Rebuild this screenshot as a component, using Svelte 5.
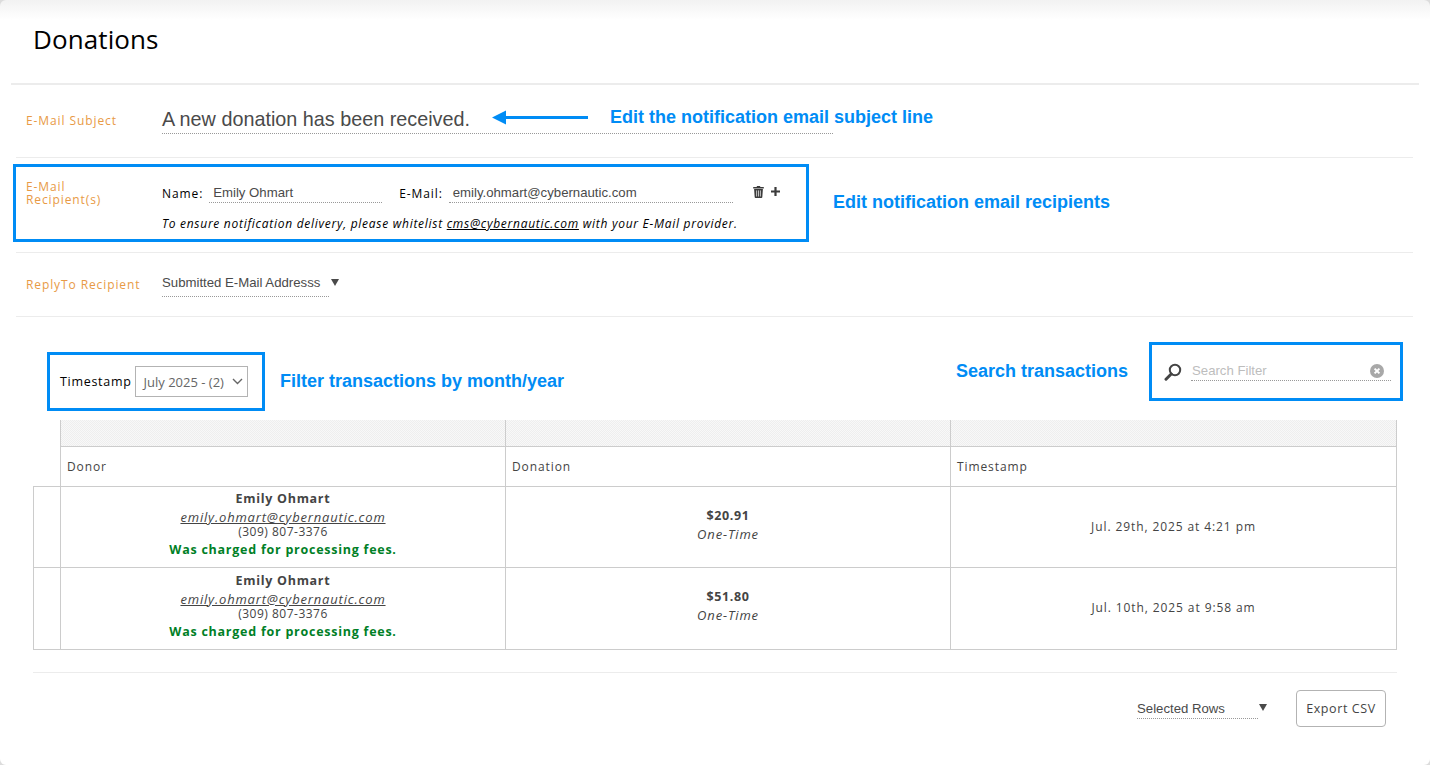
<script>
  const rows = [
    { amount: '$20.91', when: 'Jul. 29th, 2025 at 4:21 pm' },
    { amount: '$51.80', when: 'Jul. 10th, 2025 at 9:58 am' }
  ];
</script>

<div class="page">
  <h1>Donations</h1>

  <section class="setting subject">
    <span class="label">E-Mail Subject</span>
    <div class="subject-field">A new donation has been received.</div>
    <svg class="arrow" width="96" height="15" viewBox="0 0 96 15"><path d="M0 7.5 L14 0.5 V6 H96 V9 H14 V14.5 Z" fill="#008cf5"/></svg>
    <span class="note subject-note">Edit the notification email subject line</span>
  </section>

  <section class="setting recipients">
    <div class="callout recipients-box">
      <span class="label two-line">E-Mail<br />Recipient(s)</span>
      <div class="recipient-body">
        <div class="recipient-line">
          <span class="cap">Name:</span>
          <span class="field name">Emily Ohmart</span>
          <span class="cap mail">E-Mail:</span>
          <span class="field email">emily.ohmart@cybernautic.com</span>
          <svg class="trash" width="11" height="12" viewBox="0 0 11 12"><path d="M3.6 1 L4 0.1 H7 L7.4 1 H10.8 V2.5 H0.2 V1 Z M1.1 3 H9.9 L9.3 11.2 Q9.2 12 8.4 12 H2.6 Q1.8 12 1.7 11.2 Z" fill="#3b3b3b"/><path d="M3.6 4.4 V10.5 M5.5 4.4 V10.5 M7.4 4.4 V10.5" stroke="#fff" stroke-width=".7"/></svg>
          <svg class="plus" width="9" height="9" viewBox="0 0 9 9"><path d="M3.4 0 H5.6 V3.4 H9 V5.6 H5.6 V9 H3.4 V5.6 H0 V3.4 H3.4 Z" fill="#3b3b3b"/></svg>
        </div>
        <p class="hint">To ensure notification delivery, please whitelist <u>cms@cybernautic.com</u> with your E-Mail provider.</p>
      </div>
    </div>
    <span class="note recipients-note">Edit notification email recipients</span>
  </section>

  <section class="setting reply">
    <span class="label">ReplyTo Recipient</span>
    <div class="picker reply-picker">Submitted E-Mail Addresss</div>
    <span class="tri"></span>
  </section>

  <div class="filters">
    <div class="callout stamp-box">
      <span class="stamp-label">Timestamp</span>
      <div class="select">
        <span>July 2025 - (2)</span>
        <svg width="11" height="7" viewBox="0 0 11 7"><path d="M1 1 L5.5 5.5 L10 1" fill="none" stroke="#666" stroke-width="1.4"/></svg>
      </div>
    </div>
    <span class="note filter-note">Filter transactions by month/year</span>
    <span class="note search-note">Search transactions</span>
    <div class="callout search-box">
      <svg class="glass" width="18" height="18" viewBox="0 0 18 18"><circle cx="11" cy="7" r="5.2" fill="none" stroke="#444" stroke-width="2"/><path d="M7.2 11 L2 16.2" stroke="#444" stroke-width="3" stroke-linecap="round"/></svg>
      <div class="search-field">
        <span>Search Filter</span>
        <svg width="14" height="14" viewBox="0 0 14 14"><circle cx="7" cy="7" r="7" fill="#a8a8a8"/><path d="M4.6 4.6 L9.4 9.4 M9.4 4.6 L4.6 9.4" stroke="#fff" stroke-width="2"/></svg>
      </div>
    </div>
  </div>

  <div class="table">
    <div></div>
    <div class="hatch"></div>
    <div class="hatch"></div>
    <div class="hatch last"></div>
    <div class="corner"></div>
    <div class="head">Donor</div>
    <div class="head">Donation</div>
    <div class="head last">Timestamp</div>
    {#each rows as row}
      <div class="check"></div>
      <div class="cell donor">
        <strong>Emily Ohmart</strong>
        <em>emily.ohmart@cybernautic.com</em>
        <span>(309) 807-3376</span>
        <b>Was charged for processing fees.</b>
      </div>
      <div class="cell amount">
        <strong>{row.amount}</strong>
        <em>One-Time</em>
      </div>
      <div class="cell when">{row.when}</div>
    {/each}
  </div>

  <div class="footer">
    <div class="picker rows-picker">Selected Rows</div>
    <span class="tri rows-tri"></span>
    <button>Export CSV</button>
  </div>
</div>

<style>
  :global(body) {
    margin: 0;
    background: #dcdcdc;
  }
  .page {
    box-sizing: border-box;
    width: 1430px;
    height: 765px;
    overflow: hidden;
    font-family: "Open Sans", sans-serif;
    color: #000;
    background: linear-gradient(#f2f2f2 0, #fff 20px);
    border-radius: 6px;
  }
  h1 {
    box-sizing: border-box;
    height: 85px;
    margin: 0 11px;
    padding: 21px 0 0 22px;
    font-size: 26px;
    line-height: 36px;
    font-weight: 400;
    letter-spacing: .1px;
    border-bottom: 2px solid #ececec;
  }
  .setting {
    display: flex;
    align-items: flex-start;
    margin: 0 17px 0 16px;
    border-bottom: 1px solid #ececec;
  }
  .label {
    flex: none;
    width: 136px;
    font-size: 12px;
    line-height: 13px;
    letter-spacing: .9px;
    color: #e89a45;
    white-space: nowrap;
  }
  .note {
    font-family: "Liberation Sans", Arial, sans-serif;
    font-weight: 700;
    font-size: 18px;
    line-height: 22px;
    color: #008cf5;
    white-space: nowrap;
  }
  .subject {
    height: 72px;
    padding-left: 10px;
  }
  .subject .label {
    margin-top: 29px;
  }
  .subject-field {
    box-sizing: border-box;
    flex: none;
    width: 671px;
    height: 31px;
    margin-top: 18px;
    padding-top: 3px;
    font-family: "Liberation Sans", Arial, sans-serif;
    font-size: 19.8px;
    line-height: 26px;
    color: #4a4a4a;
    border-bottom: 1px dotted #999;
  }
  .arrow {
    flex: none;
    margin: 25px 0 0 -341px;
  }
  .subject-note {
    margin: 21px 0 0 22px;
  }
  .recipients {
    height: 94px;
  }
  .callout {
    box-sizing: border-box;
    flex: none;
    border: 3px solid #008cf5;
  }
  .recipients-box {
    display: flex;
    width: 796px;
    height: 78px;
    margin: 6px 0 0 -3px;
    padding: 13px 0 0 10px;
  }
  .recipient-line {
    display: flex;
    align-items: center;
    height: 26px;
    font-size: 12px;
    letter-spacing: .9px;
  }
  .field {
    box-sizing: border-box;
    height: 22px;
    margin: 0 0 2px 6px;
    padding: 3px 0 0 4px;
    font-family: "Liberation Sans", Arial, sans-serif;
    font-size: 13.2px;
    line-height: 18px;
    letter-spacing: 0;
    color: #4a4a4a;
    border-bottom: 1px dotted #999;
  }
  .name {
    width: 173px;
  }
  .mail {
    margin-left: 17px;
  }
  .email {
    width: 284px;
  }
  .trash {
    margin: 0 0 3px 20px;
  }
  .plus {
    margin: 0 0 3px 7px;
  }
  .hint {
    margin: 10px 0 0;
    font-size: 12px;
    line-height: 16px;
    font-style: italic;
    letter-spacing: .72px;
    white-space: nowrap;
  }
  .recipients-note {
    margin: 33px 0 0 24px;
  }
  .reply {
    height: 63px;
    padding-left: 10px;
  }
  .reply .label {
    margin-top: 25px;
  }
  .picker {
    box-sizing: border-box;
    font-family: "Liberation Sans", Arial, sans-serif;
    font-size: 13.2px;
    line-height: 18px;
    color: #4a4a4a;
    border-bottom: 1px dotted #999;
  }
  .reply-picker {
    width: 167px;
    height: 24px;
    margin-top: 20px;
    padding-top: 1px;
  }
  .tri {
    flex: none;
    width: 0;
    height: 0;
    margin: 26px 0 0 2px;
    border-left: 4.5px solid transparent;
    border-right: 4.5px solid transparent;
    border-top: 7px solid #4a4a4a;
  }
  .filters {
    display: flex;
    align-items: flex-start;
    height: 103px;
    padding: 0 27px 0 47px;
  }
  .stamp-box {
    display: flex;
    align-items: center;
    width: 218px;
    height: 59px;
    margin-top: 35px;
    padding-left: 10px;
    font-size: 12.5px;
    letter-spacing: .7px;
  }
  .stamp-label {
    margin-right: 3px;
  }
  .select {
    box-sizing: border-box;
    display: flex;
    align-items: center;
    justify-content: space-between;
    width: 113px;
    height: 31px;
    padding: 0 4px 0 8px;
    font-size: 13px;
    letter-spacing: 0;
    color: #666;
    border: 1px solid #b3b3b3;
  }
  .filter-note {
    margin: 53px 0 0 15px;
  }
  .search-note {
    margin: 43px 21px 0 auto;
  }
  .search-box {
    display: flex;
    align-items: center;
    width: 254px;
    height: 59px;
    margin-top: 25px;
    padding-left: 12px;
  }
  .search-field {
    box-sizing: border-box;
    display: flex;
    align-items: center;
    justify-content: space-between;
    width: 200px;
    height: 21px;
    margin: 0 0 2px 9px;
    padding: 1px 7px 0 1px;
    font-family: "Liberation Sans", Arial, sans-serif;
    font-size: 13.2px;
    color: #bdbdbd;
    border-bottom: 1px dotted #999;
  }
  .table {
    display: grid;
    grid-template-columns: 27px 445px 445px 447px;
    grid-template-rows: 27px 40px 81px 82px;
    width: 1364px;
    margin-left: 33px;
    font-size: 12px;
    letter-spacing: .9px;
    color: #444;
  }
  .corner {
    border-bottom: 1px solid #ccc;
  }
  .hatch {
    border-left: 1px solid #ccc;
    border-bottom: 1px solid #ccc;
    background-color: #f3f3f3;
    background-image: conic-gradient(#eeeeee 25%, #f8f8f8 0 50%, #eeeeee 0 75%, #f8f8f8 0);
    background-size: 2px 2px;
  }
  .head {
    padding: 11px 0 0 6px;
    border-left: 1px solid #ccc;
    border-bottom: 1px solid #ccc;
    line-height: 17px;
  }
  .last,
  .when {
    border-right: 1px solid #ccc;
  }
  .check {
    border-left: 1px solid #ccc;
    border-bottom: 1px solid #ccc;
  }
  .cell {
    display: flex;
    flex-direction: column;
    align-items: center;
    justify-content: center;
    border-left: 1px solid #ccc;
    border-bottom: 1px solid #ccc;
    text-align: center;
  }
  .donor {
    padding-bottom: 7px;
  }
  .donor strong {
    font-size: 12.5px;
    line-height: 20px;
    letter-spacing: .7px;
    font-weight: 700;
  }
  .donor em {
    line-height: 16px;
    font-size: 13px;
    letter-spacing: .82px;
    text-decoration: underline;
  }
  .donor span {
    line-height: 13px;
    letter-spacing: .5px;
  }
  .donor b {
    margin-top: 3px;
    font-size: 12.5px;
    line-height: 17px;
    letter-spacing: .75px;
    color: #008026;
  }
  .amount {
    padding-bottom: 6px;
  }
  .amount strong {
    font-size: 12.5px;
    line-height: 19px;
    letter-spacing: .6px;
  }
  .amount em {
    font-size: 13px;
    line-height: 18px;
    letter-spacing: .85px;
  }
  .when {
    padding-bottom: 2px;
  }
  .footer {
    display: flex;
    align-items: flex-start;
    box-sizing: border-box;
    width: 1364px;
    height: 78px;
    margin: 22px 0 0 33px;
    border-top: 1px solid #ececec;
  }
  .rows-picker {
    flex: none;
    width: 121px;
    height: 19px;
    margin: 27px 0 0 1104px;
  }
  .rows-tri {
    margin: 31px 0 0 1px;
  }
  button {
    flex: none;
    width: 90px;
    height: 37px;
    margin: 17px 0 0 29px;
    padding: 0;
    font: 12.5px "Open Sans", sans-serif;
    letter-spacing: .6px;
    color: #444;
    background: #fff;
    border: 1px solid #b3b3b3;
    border-radius: 4px;
  }
</style>
